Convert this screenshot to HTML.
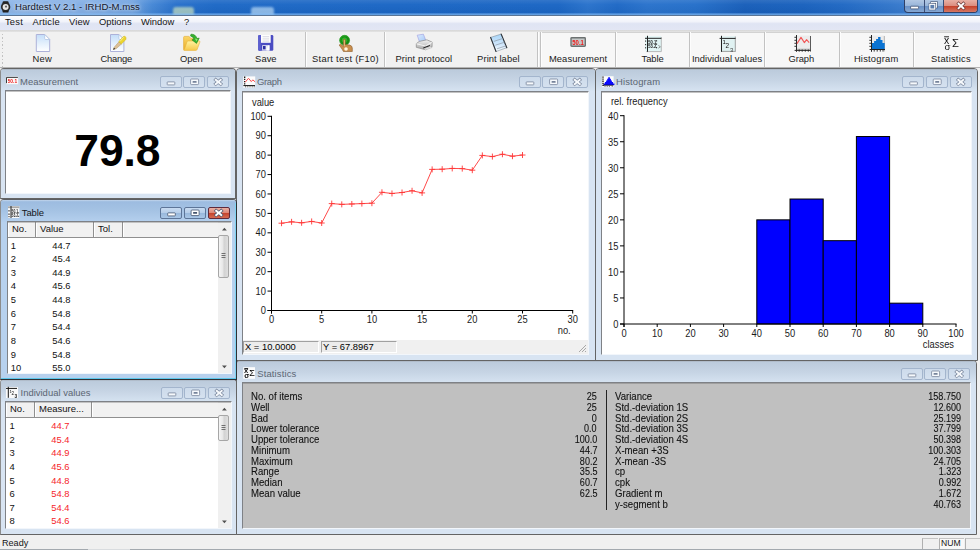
<!DOCTYPE html>
<html lang="en"><head><meta charset="utf-8"><title>Hardtest V 2.1 - IRHD-M.mss</title>
<style>
*{box-sizing:border-box;margin:0;padding:0}
html,body{width:980px;height:550px;overflow:hidden;background:#f0f0f0}
body{font-family:"Liberation Sans",sans-serif;font-size:9.4px;color:#000;position:relative;line-height:1}
.a{position:absolute}
.t{position:absolute;white-space:pre;line-height:12px;height:12px}
#title{left:0;top:0;width:980px;height:15px;background:linear-gradient(90deg,#8fb7e8 0,#84afe5 8%,#6fa2e0 13.5%,#4688d6 15.5%,#2870cb 18%,#1e69c6 22%,#1c67c5 40%,#1b66c4 57%,#2a73cc 60%,#1f69c6 63%,#2a73cc 66%,#2670ca 71%,#195fba 76%,#1a62be 82%,#2169c4 86%,#3377cb 91%,#4a88d4 96%,#5a94da 100%)}
#title .sh{left:0;top:0;width:980px;height:15px;background:linear-gradient(180deg,rgba(255,255,255,.10) 0,rgba(255,255,255,.02) 30%,rgba(0,0,0,.03) 80%,rgba(0,0,0,0) 100%)}
.blob{position:absolute;top:7px;height:9px;border-radius:3px 3px 0 0;filter:blur(1.2px)}
#tline{left:0;top:15px;width:980px;height:1px;background:#5a7596}
#menu{left:0;top:16px;width:980px;height:14px;background:linear-gradient(180deg,#fcfdff 0,#f1f3fa 40%,#dfe4f3 55%,#e2e6f4 100%)}
#mline{left:0;top:30px;width:980px;height:2px;background:linear-gradient(180deg,#d6d6d6,#e4e4e4)}
#tb{left:0;top:32px;width:980px;height:35px;background:#f1f1f1}
#tbline{left:0;top:67px;width:980px;height:1px;background:#b4b4b4}
.tl{position:absolute;top:52.5px;height:12px;line-height:12px;white-space:pre;font-size:9.4px;color:#1a1a1a}
.sep{position:absolute;top:32px;width:1px;height:35px;background:#c2c2c2;box-shadow:1px 0 0 #fdfdfd}
.w{position:absolute;background:#d8e4f2;border:1px solid #646464;border-radius:4px 4px 0 0}
.w .tbar{position:absolute;left:0;top:0;right:0;height:22px;border-radius:3px 3px 0 0;background:linear-gradient(180deg,#a9b3bf 0,#bccbdc 6%,#c6d4e4 50%,#d6e3f1 100%)}
.w.act{background:#b7d1ee;border-color:#2e3034;border-top-color:#5c5e62;border-left-color:#8c8c8c;z-index:2}
.w.act .tbar{background:linear-gradient(180deg,#c3d6ec 0,#9dbce0 8%,#a5c3e4 50%,#b5d0ee 100%)}
.w.act .cy{position:absolute;right:0;top:3px;bottom:0;width:1px;background:#7fd4f2}
.w.act .cyb{position:absolute;left:0;right:0;bottom:0;height:1px;background:#5cc6ea}
.w .cap{position:absolute;height:12px;line-height:12px;font-size:9.45px;color:#5b6673;white-space:pre}
.w.act .cap{color:#15161a}
.cl{position:absolute;background:#fff;border:1px solid #7e8186;border-right-color:#f2f6fb;border-bottom-color:#f2f6fb}
.cl:after{content:'';position:absolute;left:0;top:0;right:0;height:1px;background:rgba(120,120,120,.45);pointer-events:none}
.cb{position:absolute;height:12px;width:22px;border:1px solid #a3b5cd;border-radius:2px;background:linear-gradient(180deg,#cddbeb 0,#d5e1ef 100%)}
.w.act .cb{border-color:#5d7598;background:linear-gradient(180deg,#c8dbf1 0,#b5cde9 48%,#98b8dc 52%,#a9c6e6 100%)}
.w.act .cb.x{border-color:#5f2a3c;background:linear-gradient(180deg,#e9b0a4 0,#dc8676 48%,#c5432c 52%,#d46a52 100%)}
.hd{position:absolute;top:0;height:16px;background:#f1f1f1;border-right:1px solid #8f8f8f;border-bottom:1px solid #8f8f8f;box-shadow:inset 1px 1px 0 #fff;font-size:9.5px;line-height:14px;padding:0 0 0 4px;white-space:pre;color:#111}
.row{position:absolute;height:12px;line-height:12px;font-size:9.4px;white-space:pre;color:#111}
.sb{position:absolute;right:0;top:0;bottom:0;width:13px;background:#f0f0f0}
.th{position:absolute;left:0;width:11px;border:1px solid #a6a6a6;border-radius:2px;background:linear-gradient(90deg,#f5f5f5 0,#e6e6e6 45%,#d2d2d2 55%,#dedede 100%)}
svg{position:absolute;left:0;top:0;overflow:visible}
svg text{font-family:"Liberation Sans",sans-serif}
.st{position:absolute;font-size:10.5px;line-height:11px;height:11px;white-space:pre;color:#111;-webkit-text-stroke:.1px #111;transform:scaleX(.915);transform-origin:0 50%}
.sv{position:absolute;font-size:10.5px;line-height:11px;height:11px;white-space:pre;color:#111;-webkit-text-stroke:.1px #111;transform:scaleX(.86);transform-origin:100% 50%}
</style></head>
<body>
<div id="title" class="a"><div class="blob" style="left:173px;width:21px;background:rgba(205,230,195,.7)"></div><div class="blob" style="left:251px;width:23px;background:rgba(190,222,250,.7)"></div><div class="sh a"></div><div class="a" style="left:0;top:13px;width:980px;height:2px;background:linear-gradient(180deg,rgba(130,185,240,.25),rgba(130,185,240,.8))"></div></div>
<div id="tline" class="a"></div>
<div class="t" style="left:15.1px;top:1px;font-size:9.6px;color:#14182a;text-shadow:0 0 3px rgba(255,255,255,.8),0 0 6px rgba(255,255,255,.55);">Hardtest V 2.1 - IRHD-M.mss</div>
<div class="a" style="left:904px;top:0;width:74px;height:13px;border:1px solid #2f4066;border-top:0;border-radius:0 0 4px 4px;overflow:hidden;background:linear-gradient(180deg,#b3c8e3 0,#98b5da 48%,#6a91c6 52%,#86a8d3 100%)"><div class="a" style="left:19px;top:0;width:1px;height:13px;background:#3a4d76"></div><div class="a" style="left:38px;top:0;width:1px;height:13px;background:#3a4d76"></div><div class="a" style="left:39px;top:0;width:34px;height:12px;background:linear-gradient(180deg,#e8b0a5 0,#dc8d7f 48%,#c5412a 52%,#d67864 100%)"></div></div>
<div id="menu" class="a"></div><div id="mline" class="a"></div>
<div class="t" style="left:4.9px;top:16px;font-size:9.4px;color:#151515;letter-spacing:0.232px;">Test</div>
<div class="t" style="left:32.5px;top:16px;font-size:9.4px;color:#151515;letter-spacing:0.176px;">Article</div>
<div class="t" style="left:68.9px;top:16px;font-size:9.4px;color:#151515;letter-spacing:0.181px;">View</div>
<div class="t" style="left:98.9px;top:16px;font-size:9.4px;color:#151515;letter-spacing:0.065px;">Options</div>
<div class="t" style="left:140.9px;top:16px;font-size:9.4px;color:#151515;letter-spacing:-0.009px;">Window</div>
<div class="t" style="left:183.9px;top:16px;font-size:9.4px;color:#151515;letter-spacing:0.481px;">?</div>
<div id="tb" class="a"></div><div id="tbline" class="a"></div>
<div class="a" style="left:541px;top:33px;width:439px;height:34px;background:#f7f7f7"></div>
<div class="a" style="left:541px;top:32px;width:439px;height:1px;background:#d2d2d2"></div>
<div class="a" style="left:2px;top:33.6px;width:1px;height:1.4px;background:#c2c2c2"></div>
<div class="a" style="left:2px;top:37.2px;width:1px;height:1.4px;background:#c2c2c2"></div>
<div class="a" style="left:2px;top:40.8px;width:1px;height:1.4px;background:#c2c2c2"></div>
<div class="a" style="left:2px;top:44.4px;width:1px;height:1.4px;background:#c2c2c2"></div>
<div class="a" style="left:2px;top:48.0px;width:1px;height:1.4px;background:#c2c2c2"></div>
<div class="a" style="left:2px;top:51.6px;width:1px;height:1.4px;background:#c2c2c2"></div>
<div class="a" style="left:2px;top:55.2px;width:1px;height:1.4px;background:#c2c2c2"></div>
<div class="a" style="left:2px;top:58.8px;width:1px;height:1.4px;background:#c2c2c2"></div>
<div class="a" style="left:2px;top:62.4px;width:1px;height:1.4px;background:#c2c2c2"></div>
<div class="a" style="left:2px;top:66.0px;width:1px;height:1.4px;background:#c2c2c2"></div>
<div class="tl" style="left:32.5px;letter-spacing:0.267px">New</div>
<div class="tl" style="left:100.5px;letter-spacing:-0.229px">Change</div>
<div class="tl" style="left:180.1px;letter-spacing:-0.146px">Open</div>
<div class="tl" style="left:255.1px;letter-spacing:0.042px">Save</div>
<div class="tl" style="left:312.0px;letter-spacing:0.278px">Start test (F10)</div>
<div class="tl" style="left:395.5px;letter-spacing:0.113px">Print protocol</div>
<div class="tl" style="left:477.1px;letter-spacing:0.08px">Print label</div>
<div class="tl" style="left:548.9px;letter-spacing:0.097px">Measurement</div>
<div class="tl" style="left:641.5px;letter-spacing:-0.03px">Table</div>
<div class="tl" style="left:691.9px;letter-spacing:0.061px">Individual values</div>
<div class="tl" style="left:788.5px;letter-spacing:-0.091px">Graph</div>
<div class="tl" style="left:853.9px;letter-spacing:0.198px">Histogram</div>
<div class="tl" style="left:931.1px;letter-spacing:0.22px">Statistics</div>
<div class="sep" style="left:305px"></div>
<div class="sep" style="left:384px"></div>
<div class="sep" style="left:537px"></div>
<div class="sep" style="left:540px"></div>
<div class="sep" style="left:615px"></div>
<div class="sep" style="left:689px"></div>
<div class="sep" style="left:764px"></div>
<div class="sep" style="left:839px"></div>
<div class="sep" style="left:913px"></div>
<div class="w" style="left:0px;top:68px;width:236px;height:131px;border-left-color:#8c8c8c"><div class="tbar"></div><div class="cap" style="left:19.1px;top:6.799999999999997px;letter-spacing:0.04px">Measurement</div><div class="cb x" style="left:206px;top:7.299999999999997px"></div><div class="cb" style="left:182.2px;top:7.299999999999997px"></div><div class="cb" style="left:158.8px;top:7.299999999999997px"></div><svg width="236" height="22" viewBox="0 0 236 22"><rect x="166.20000000000002" y="12.899999999999997" width="7.6" height="3" rx=".5" fill="#f6f9fc" stroke="#76839a" stroke-width=".8"/><rect x="189.6" y="9.999999999999996" width="8" height="5.6" rx=".9" fill="#f6f9fc" stroke="#76839a" stroke-width=".8"/><rect x="191.6" y="11.899999999999997" width="4" height="1.9" rx=".4" fill="#76839a"/><path d="M214.7 10.799999999999997l5 4.2M219.7 10.799999999999997l-5 4.2" stroke="#76839a" stroke-width="3.3" stroke-linecap="square"/><path d="M214.7 10.799999999999997l5 4.2M219.7 10.799999999999997l-5 4.2" stroke="#f6f9fc" stroke-width="2" stroke-linecap="square"/></svg><div class="cl" style="left:4px;top:21px;width:226px;height:104px"><div class="a" style="left:0;top:0;right:0;bottom:0;overflow:hidden"><div class="a" style="left:0;top:0;right:0;bottom:0;text-align:center;font-weight:bold;font-size:44.4px;line-height:44px;padding-top:38.4px;letter-spacing:-.1px;padding-right:1.4px">79.8</div></div></div></div>
<div class="w act" style="left:0px;top:199px;width:237px;height:181px;border-left-color:#8c8c8c"><div class="tbar"></div><div class="cy"></div><div class="cyb"></div><div class="cap" style="left:20.8px;top:6.800000000000011px;letter-spacing:-0.116px">Table</div><div class="cb x" style="left:206.5px;top:7.300000000000011px"></div><div class="cb" style="left:182.7px;top:7.300000000000011px"></div><div class="cb" style="left:159.3px;top:7.300000000000011px"></div><svg width="237" height="22" viewBox="0 0 237 22"><rect x="166.70000000000002" y="12.900000000000011" width="7.6" height="3" rx=".5" fill="#fff" stroke="#44546e" stroke-width=".8"/><rect x="190.1" y="10.00000000000001" width="8" height="5.6" rx=".9" fill="#fff" stroke="#44546e" stroke-width=".8"/><rect x="192.1" y="11.900000000000011" width="4" height="1.9" rx=".4" fill="#44546e"/><path d="M215.2 10.800000000000011l5 4.2M220.2 10.800000000000011l-5 4.2" stroke="#44546e" stroke-width="3.3" stroke-linecap="square"/><path d="M215.2 10.800000000000011l5 4.2M220.2 10.800000000000011l-5 4.2" stroke="#fff" stroke-width="2" stroke-linecap="square"/></svg><div class="cl" style="left:6px;top:21px;width:225px;height:153px"><div class="a" style="left:0;top:0;right:0;bottom:0;overflow:hidden"><div class="hd" style="left:0px;width:28px;height:16px">No.</div><div class="hd" style="left:28px;width:58px;height:16px">Value</div><div class="hd" style="left:86px;width:29px;height:16px">Tol.</div><div class="hd" style="left:115px;right:13px;border-right:0;height:16px"></div><div class="sb"><svg width="13" height="14" viewBox="0 0 13 14"><path d="M4 8.6l2.4-2.8 2.4 2.8z" fill="#505050"/></svg><div class="th" style="top:13px;height:43px"></div><svg width="13" height="80" viewBox="0 0 13 80"><path d="M3.5 31.5h4M3.5 33.5h4M3.5 35.5h4" stroke="#6f6f6f" stroke-width="1"/></svg><svg width="13" height="10" style="top:auto;bottom:1px" viewBox="0 0 13 10"><path d="M4 3.4l2.4 2.8 2.4-2.8z" fill="#505050"/></svg></div><div class="row" style="left:2.8px;top:17.50px">1</div><div class="row" style="left:44.3px;top:17.50px;color:#111">44.7</div><div class="row" style="left:2.8px;top:31.13px">2</div><div class="row" style="left:44.3px;top:31.13px;color:#111">45.4</div><div class="row" style="left:2.8px;top:44.76px">3</div><div class="row" style="left:44.3px;top:44.76px;color:#111">44.9</div><div class="row" style="left:2.8px;top:58.39px">4</div><div class="row" style="left:44.3px;top:58.39px;color:#111">45.6</div><div class="row" style="left:2.8px;top:72.02px">5</div><div class="row" style="left:44.3px;top:72.02px;color:#111">44.8</div><div class="row" style="left:2.8px;top:85.65px">6</div><div class="row" style="left:44.3px;top:85.65px;color:#111">54.8</div><div class="row" style="left:2.8px;top:99.28px">7</div><div class="row" style="left:44.3px;top:99.28px;color:#111">54.4</div><div class="row" style="left:2.8px;top:112.91px">8</div><div class="row" style="left:44.3px;top:112.91px;color:#111">54.6</div><div class="row" style="left:2.8px;top:126.54px">9</div><div class="row" style="left:44.3px;top:126.54px;color:#111">54.8</div><div class="row" style="left:2.8px;top:140.17px">10</div><div class="row" style="left:44.3px;top:140.17px;color:#111">55.0</div></div></div></div>
<div class="w" style="left:0px;top:379px;width:237px;height:156px;border-left-color:#8c8c8c"><div class="tbar"></div><div class="cap" style="left:19.5px;top:6.800000000000011px;letter-spacing:0.014px">Individual values</div><div class="cb x" style="left:207px;top:7.300000000000011px"></div><div class="cb" style="left:183.2px;top:7.300000000000011px"></div><div class="cb" style="left:159.8px;top:7.300000000000011px"></div><svg width="237" height="22" viewBox="0 0 237 22"><rect x="167.20000000000002" y="12.900000000000011" width="7.6" height="3" rx=".5" fill="#f6f9fc" stroke="#76839a" stroke-width=".8"/><rect x="190.6" y="10.00000000000001" width="8" height="5.6" rx=".9" fill="#f6f9fc" stroke="#76839a" stroke-width=".8"/><rect x="192.6" y="11.900000000000011" width="4" height="1.9" rx=".4" fill="#76839a"/><path d="M215.7 10.800000000000011l5 4.2M220.7 10.800000000000011l-5 4.2" stroke="#76839a" stroke-width="3.3" stroke-linecap="square"/><path d="M215.7 10.800000000000011l5 4.2M220.7 10.800000000000011l-5 4.2" stroke="#f6f9fc" stroke-width="2" stroke-linecap="square"/></svg><div class="cl" style="left:4px;top:21px;width:227px;height:128px"><div class="a" style="left:0;top:0;right:0;bottom:0;overflow:hidden"><div class="hd" style="left:0px;width:29px;height:16px">No.</div><div class="hd" style="left:29px;width:57px;height:16px">Measure...</div><div class="hd" style="left:86px;right:13px;border-right:0;height:16px"></div><div class="sb"><svg width="13" height="14" viewBox="0 0 13 14"><path d="M4 8.6l2.4-2.8 2.4 2.8z" fill="#505050"/></svg><div class="th" style="top:13px;height:26px"></div><svg width="13" height="80" viewBox="0 0 13 80"><path d="M3.5 23.5h4M3.5 25.5h4M3.5 27.5h4" stroke="#6f6f6f" stroke-width="1"/></svg><svg width="13" height="10" style="top:auto;bottom:1px" viewBox="0 0 13 10"><path d="M4 3.4l2.4 2.8 2.4-2.8z" fill="#505050"/></svg></div><div class="row" style="left:3.5px;top:18.00px">1</div><div class="row" style="left:45.3px;top:18.00px;color:#f5252b">44.7</div><div class="row" style="left:3.5px;top:31.63px">2</div><div class="row" style="left:45.3px;top:31.63px;color:#f5252b">45.4</div><div class="row" style="left:3.5px;top:45.26px">3</div><div class="row" style="left:45.3px;top:45.26px;color:#f5252b">44.9</div><div class="row" style="left:3.5px;top:58.89px">4</div><div class="row" style="left:45.3px;top:58.89px;color:#f5252b">45.6</div><div class="row" style="left:3.5px;top:72.52px">5</div><div class="row" style="left:45.3px;top:72.52px;color:#f5252b">44.8</div><div class="row" style="left:3.5px;top:86.15px">6</div><div class="row" style="left:45.3px;top:86.15px;color:#f5252b">54.8</div><div class="row" style="left:3.5px;top:99.78px">7</div><div class="row" style="left:45.3px;top:99.78px;color:#f5252b">54.4</div><div class="row" style="left:3.5px;top:113.41px">8</div><div class="row" style="left:45.3px;top:113.41px;color:#f5252b">54.6</div></div></div></div>
<div class="w" style="left:236px;top:68px;width:360px;height:293px"><div class="tbar"></div><div class="cap" style="left:19.899999999999977px;top:6.799999999999997px;letter-spacing:-0.284px">Graph</div><div class="cb x" style="left:329px;top:7.299999999999997px"></div><div class="cb" style="left:305.2px;top:7.299999999999997px"></div><div class="cb" style="left:281.8px;top:7.299999999999997px"></div><svg width="360" height="22" viewBox="0 0 360 22"><rect x="289.2" y="12.899999999999997" width="7.6" height="3" rx=".5" fill="#f6f9fc" stroke="#76839a" stroke-width=".8"/><rect x="312.59999999999997" y="9.999999999999996" width="8" height="5.6" rx=".9" fill="#f6f9fc" stroke="#76839a" stroke-width=".8"/><rect x="314.59999999999997" y="11.899999999999997" width="4" height="1.9" rx=".4" fill="#76839a"/><path d="M337.7 10.799999999999997l5 4.2M342.7 10.799999999999997l-5 4.2" stroke="#76839a" stroke-width="3.3" stroke-linecap="square"/><path d="M337.7 10.799999999999997l5 4.2M342.7 10.799999999999997l-5 4.2" stroke="#f6f9fc" stroke-width="2" stroke-linecap="square"/></svg><div class="cl" style="left:5px;top:22px;width:347px;height:264px"><div class="a" style="left:0;top:0;right:0;bottom:0;overflow:hidden"><svg width="346" height="262" viewBox="0 0 346 262"><path d="M28.5 23.80000000000001V221.5M24.5 218.5H330.20000000000005" fill="none" stroke="#000" stroke-width="1"/><path d="M24.5 218.50H28.5M24.5 199.08H28.5M24.5 179.66H28.5M24.5 160.24H28.5M24.5 140.82H28.5M24.5 121.40H28.5M24.5 101.98H28.5M24.5 82.56H28.5M24.5 63.14H28.5M24.5 43.72H28.5M24.5 24.30H28.5M28.50 218.5V221.5M78.70 218.5V221.5M128.90 218.5V221.5M179.10 218.5V221.5M229.30 218.5V221.5M279.50 218.5V221.5M329.70 218.5V221.5" stroke="#000" stroke-width="1" fill="none"/><text transform="translate(23.00 222.10) scale(0.925 1)" font-size="10.1" text-anchor="end" fill="#1c1c1c">0</text><text transform="translate(23.00 202.68) scale(0.925 1)" font-size="10.1" text-anchor="end" fill="#1c1c1c">10</text><text transform="translate(23.00 183.26) scale(0.925 1)" font-size="10.1" text-anchor="end" fill="#1c1c1c">20</text><text transform="translate(23.00 163.84) scale(0.925 1)" font-size="10.1" text-anchor="end" fill="#1c1c1c">30</text><text transform="translate(23.00 144.42) scale(0.925 1)" font-size="10.1" text-anchor="end" fill="#1c1c1c">40</text><text transform="translate(23.00 125.00) scale(0.925 1)" font-size="10.1" text-anchor="end" fill="#1c1c1c">50</text><text transform="translate(23.00 105.58) scale(0.925 1)" font-size="10.1" text-anchor="end" fill="#1c1c1c">60</text><text transform="translate(23.00 86.16) scale(0.925 1)" font-size="10.1" text-anchor="end" fill="#1c1c1c">70</text><text transform="translate(23.00 66.74) scale(0.925 1)" font-size="10.1" text-anchor="end" fill="#1c1c1c">80</text><text transform="translate(23.00 47.32) scale(0.925 1)" font-size="10.1" text-anchor="end" fill="#1c1c1c">90</text><text transform="translate(23.00 27.90) scale(0.925 1)" font-size="10.1" text-anchor="end" fill="#1c1c1c">100</text><text transform="translate(28.50 231.30) scale(0.925 1)" font-size="10.1" text-anchor="middle" fill="#1c1c1c">0</text><text transform="translate(78.70 231.30) scale(0.925 1)" font-size="10.1" text-anchor="middle" fill="#1c1c1c">5</text><text transform="translate(128.90 231.30) scale(0.925 1)" font-size="10.1" text-anchor="middle" fill="#1c1c1c">10</text><text transform="translate(179.10 231.30) scale(0.925 1)" font-size="10.1" text-anchor="middle" fill="#1c1c1c">15</text><text transform="translate(229.30 231.30) scale(0.925 1)" font-size="10.1" text-anchor="middle" fill="#1c1c1c">20</text><text transform="translate(279.50 231.30) scale(0.925 1)" font-size="10.1" text-anchor="middle" fill="#1c1c1c">25</text><text transform="translate(329.70 231.30) scale(0.925 1)" font-size="10.1" text-anchor="middle" fill="#1c1c1c">30</text><text transform="translate(9.00 13.80) scale(0.925 1)" font-size="10.1" text-anchor="start" fill="#1c1c1c">value</text><text transform="translate(327.70 241.90) scale(0.925 1)" font-size="10.1" text-anchor="end" fill="#1c1c1c">no.</text><polyline points="38.54,131.19 48.58,129.83 58.62,130.80 68.66,129.44 78.70,131.00 88.74,111.58 98.78,112.36 108.82,111.97 118.86,111.58 128.90,111.19 138.94,100.31 148.98,101.48 159.02,100.51 169.06,98.76 179.10,100.90 189.14,77.40 199.18,77.21 209.22,76.43 219.26,76.62 229.30,78.18 239.34,63.42 249.38,64.58 259.42,62.25 269.46,64.19 279.50,63.03" fill="none" stroke="#ff3535" stroke-width=".9"/><path d="M35.54 131.19h6M38.54 128.19v6M45.58 129.83h6M48.58 126.83v6M55.62 130.80h6M58.62 127.80v6M65.66 129.44h6M68.66 126.44v6M75.70 131.00h6M78.70 128.00v6M85.74 111.58h6M88.74 108.58v6M95.78 112.36h6M98.78 109.36v6M105.82 111.97h6M108.82 108.97v6M115.86 111.58h6M118.86 108.58v6M125.90 111.19h6M128.90 108.19v6M135.94 100.31h6M138.94 97.31v6M145.98 101.48h6M148.98 98.48v6M156.02 100.51h6M159.02 97.51v6M166.06 98.76h6M169.06 95.76v6M176.10 100.90h6M179.10 97.90v6M186.14 77.40h6M189.14 74.40v6M196.18 77.21h6M199.18 74.21v6M206.22 76.43h6M209.22 73.43v6M216.26 76.62h6M219.26 73.62v6M226.30 78.18h6M229.30 75.18v6M236.34 63.42h6M239.34 60.42v6M246.38 64.58h6M249.38 61.58v6M256.42 62.25h6M259.42 59.25v6M266.46 64.19h6M269.46 61.19v6M276.50 63.03h6M279.50 60.03v6" stroke="#ff3535" stroke-width=".9" fill="none"/></svg><div class="a" style="left:0;right:0;bottom:0;height:14px;background:#f0f0f0"></div><div class="a" style="left:0;bottom:1px;width:76px;height:12px;background:#ececec;border:1px solid #a0a0a0;border-right-color:#fff;border-bottom-color:#fff"></div><div class="a" style="left:78px;bottom:1px;width:76px;height:12px;background:#ececec;border:1px solid #a0a0a0;border-right-color:#fff;border-bottom-color:#fff"></div><div class="t" style="left:2px;bottom:1px;font-size:9.4px">X = 10.0000</div><div class="t" style="left:80px;bottom:1px;font-size:9.4px">Y = 67.8967</div><svg width="10" height="10" style="left:auto;top:auto;right:1px;bottom:1px" viewBox="0 0 10 10"><path d="M9 2L2 9M9 5L5 9M9 8L8 9" stroke="#a8a8a8" stroke-width="1"/></svg></div></div></div>
<div class="w" style="left:595px;top:68px;width:383px;height:293px"><div class="tbar"></div><div class="cap" style="left:20.0px;top:6.799999999999997px;letter-spacing:0.136px">Histogram</div><div class="cb x" style="left:353.6px;top:7.299999999999997px"></div><div class="cb" style="left:329.8px;top:7.299999999999997px"></div><div class="cb" style="left:306.40000000000003px;top:7.299999999999997px"></div><svg width="383" height="22" viewBox="0 0 383 22"><rect x="313.8" y="12.899999999999997" width="7.6" height="3" rx=".5" fill="#f6f9fc" stroke="#76839a" stroke-width=".8"/><rect x="337.2" y="9.999999999999996" width="8" height="5.6" rx=".9" fill="#f6f9fc" stroke="#76839a" stroke-width=".8"/><rect x="339.2" y="11.899999999999997" width="4" height="1.9" rx=".4" fill="#76839a"/><path d="M362.3 10.799999999999997l5 4.2M367.3 10.799999999999997l-5 4.2" stroke="#76839a" stroke-width="3.3" stroke-linecap="square"/><path d="M362.3 10.799999999999997l5 4.2M367.3 10.799999999999997l-5 4.2" stroke="#f6f9fc" stroke-width="2" stroke-linecap="square"/></svg><div class="cl" style="left:5px;top:22px;width:371px;height:264px"><div class="a" style="left:0;top:0;right:0;bottom:0;overflow:hidden"><svg width="370" height="262" viewBox="0 0 370 262"><rect x="154.80" y="127.85" width="33.20" height="104.15" fill="#0000ff" stroke="#000" stroke-width="1"/><rect x="188.00" y="107.02" width="33.20" height="124.98" fill="#0000ff" stroke="#000" stroke-width="1"/><rect x="221.20" y="148.68" width="33.20" height="83.32" fill="#0000ff" stroke="#000" stroke-width="1"/><rect x="254.40" y="44.53" width="33.20" height="187.47" fill="#0000ff" stroke="#000" stroke-width="1"/><rect x="287.60" y="211.17" width="33.20" height="20.83" fill="#0000ff" stroke="#000" stroke-width="1"/><path d="M22 23.19999999999999V235M18 232H354.5" fill="none" stroke="#000" stroke-width="1"/><path d="M18 232.00H22M18 205.96H22M18 179.93H22M18 153.89H22M18 127.85H22M18 101.81H22M18 75.77H22M18 49.74H22M18 23.70H22M22.00 232V235M55.20 232V235M88.40 232V235M121.60 232V235M154.80 232V235M188.00 232V235M221.20 232V235M254.40 232V235M287.60 232V235M320.80 232V235M354.00 232V235" stroke="#000" stroke-width="1" fill="none"/><text transform="translate(16.50 236.00) scale(0.925 1)" font-size="10.1" text-anchor="end" fill="#1c1c1c">0</text><text transform="translate(16.50 209.96) scale(0.925 1)" font-size="10.1" text-anchor="end" fill="#1c1c1c">5</text><text transform="translate(16.50 183.93) scale(0.925 1)" font-size="10.1" text-anchor="end" fill="#1c1c1c">10</text><text transform="translate(16.50 157.89) scale(0.925 1)" font-size="10.1" text-anchor="end" fill="#1c1c1c">15</text><text transform="translate(16.50 131.85) scale(0.925 1)" font-size="10.1" text-anchor="end" fill="#1c1c1c">20</text><text transform="translate(16.50 105.81) scale(0.925 1)" font-size="10.1" text-anchor="end" fill="#1c1c1c">25</text><text transform="translate(16.50 79.77) scale(0.925 1)" font-size="10.1" text-anchor="end" fill="#1c1c1c">30</text><text transform="translate(16.50 53.74) scale(0.925 1)" font-size="10.1" text-anchor="end" fill="#1c1c1c">35</text><text transform="translate(16.50 27.70) scale(0.925 1)" font-size="10.1" text-anchor="end" fill="#1c1c1c">40</text><text transform="translate(22.00 245.20) scale(0.925 1)" font-size="10.1" text-anchor="middle" fill="#1c1c1c">0</text><text transform="translate(55.20 245.20) scale(0.925 1)" font-size="10.1" text-anchor="middle" fill="#1c1c1c">10</text><text transform="translate(88.40 245.20) scale(0.925 1)" font-size="10.1" text-anchor="middle" fill="#1c1c1c">20</text><text transform="translate(121.60 245.20) scale(0.925 1)" font-size="10.1" text-anchor="middle" fill="#1c1c1c">30</text><text transform="translate(154.80 245.20) scale(0.925 1)" font-size="10.1" text-anchor="middle" fill="#1c1c1c">40</text><text transform="translate(188.00 245.20) scale(0.925 1)" font-size="10.1" text-anchor="middle" fill="#1c1c1c">50</text><text transform="translate(221.20 245.20) scale(0.925 1)" font-size="10.1" text-anchor="middle" fill="#1c1c1c">60</text><text transform="translate(254.40 245.20) scale(0.925 1)" font-size="10.1" text-anchor="middle" fill="#1c1c1c">70</text><text transform="translate(287.60 245.20) scale(0.925 1)" font-size="10.1" text-anchor="middle" fill="#1c1c1c">80</text><text transform="translate(320.80 245.20) scale(0.925 1)" font-size="10.1" text-anchor="middle" fill="#1c1c1c">90</text><text transform="translate(354.00 245.20) scale(0.925 1)" font-size="10.1" text-anchor="middle" fill="#1c1c1c">100</text><text transform="translate(9.00 13.00) scale(0.925 1)" font-size="10.1" text-anchor="start" fill="#1c1c1c">rel. frequency</text><text transform="translate(352.00 255.70) scale(0.925 1)" font-size="10.1" text-anchor="end" fill="#1c1c1c">classes</text></svg></div></div></div>
<div class="w" style="left:236px;top:360px;width:741px;height:175px"><div class="tbar"></div><div class="cap" style="left:20.30000000000001px;top:6.800000000000011px;letter-spacing:0.126px">Statistics</div><div class="cb x" style="left:711px;top:7.300000000000011px"></div><div class="cb" style="left:687.2px;top:7.300000000000011px"></div><div class="cb" style="left:663.8px;top:7.300000000000011px"></div><svg width="741" height="22" viewBox="0 0 741 22"><rect x="671.1999999999999" y="12.900000000000011" width="7.6" height="3" rx=".5" fill="#f6f9fc" stroke="#76839a" stroke-width=".8"/><rect x="694.6" y="10.00000000000001" width="8" height="5.6" rx=".9" fill="#f6f9fc" stroke="#76839a" stroke-width=".8"/><rect x="696.6" y="11.900000000000011" width="4" height="1.9" rx=".4" fill="#76839a"/><path d="M719.7 10.800000000000011l5 4.2M724.7 10.800000000000011l-5 4.2" stroke="#76839a" stroke-width="3.3" stroke-linecap="square"/><path d="M719.7 10.800000000000011l5 4.2M724.7 10.800000000000011l-5 4.2" stroke="#f6f9fc" stroke-width="2" stroke-linecap="square"/></svg><div class="cl" style="left:5px;top:21px;width:729px;height:147px"><div class="a" style="left:0;top:0;right:0;bottom:0;overflow:hidden"><div class="a" style="left:0;top:0;right:0;bottom:0;background:#c0c0c0"></div><div class="st" style="left:8.400000000000006px;top:8.00px">No. of items</div><div class="sv" style="right:373px;top:8.00px">25</div><div class="st" style="left:8.400000000000006px;top:18.50px">Well</div><div class="sv" style="right:373px;top:18.50px">25</div><div class="st" style="left:8.400000000000006px;top:29.50px">Bad</div><div class="sv" style="right:373px;top:29.50px">0</div><div class="st" style="left:8.400000000000006px;top:40.00px">Lower tolerance</div><div class="sv" style="right:373px;top:40.00px">0.0</div><div class="st" style="left:8.400000000000006px;top:50.50px">Upper tolerance</div><div class="sv" style="right:373px;top:50.50px">100.0</div><div class="st" style="left:8.400000000000006px;top:61.50px">Minimum</div><div class="sv" style="right:373px;top:61.50px">44.7</div><div class="st" style="left:8.400000000000006px;top:72.50px">Maximum</div><div class="sv" style="right:373px;top:72.50px">80.2</div><div class="st" style="left:8.400000000000006px;top:83.00px">Range</div><div class="sv" style="right:373px;top:83.00px">35.5</div><div class="st" style="left:8.400000000000006px;top:93.50px">Median</div><div class="sv" style="right:373px;top:93.50px">60.7</div><div class="st" style="left:8.400000000000006px;top:104.50px">Mean value</div><div class="sv" style="right:373px;top:104.50px">62.5</div><div class="st" style="left:371.5px;top:8.00px">Variance</div><div class="sv" style="right:9px;top:8.00px">158.750</div><div class="st" style="left:371.5px;top:18.50px">Std.-deviation 1S</div><div class="sv" style="right:9px;top:18.50px">12.600</div><div class="st" style="left:371.5px;top:29.50px">Std.-deviation 2S</div><div class="sv" style="right:9px;top:29.50px">25.199</div><div class="st" style="left:371.5px;top:40.00px">Std.-deviation 3S</div><div class="sv" style="right:9px;top:40.00px">37.799</div><div class="st" style="left:371.5px;top:50.50px">Std.-deviation 4S</div><div class="sv" style="right:9px;top:50.50px">50.398</div><div class="st" style="left:371.5px;top:61.50px">X-mean +3S</div><div class="sv" style="right:9px;top:61.50px">100.303</div><div class="st" style="left:371.5px;top:72.50px">X-mean -3S</div><div class="sv" style="right:9px;top:72.50px">24.705</div><div class="st" style="left:371.5px;top:83.00px">cp</div><div class="sv" style="right:9px;top:83.00px">1.323</div><div class="st" style="left:371.5px;top:93.50px">cpk</div><div class="sv" style="right:9px;top:93.50px">0.992</div><div class="st" style="left:371.5px;top:104.50px">Gradient m</div><div class="sv" style="right:9px;top:104.50px">1.672</div><div class="st" style="left:371.5px;top:116.00px">y-segment b</div><div class="sv" style="right:9px;top:116.00px">40.763</div><div class="a" style="left:363px;top:7px;width:1px;height:120px;background:#222"></div></div></div></div>
<div class="a" style="left:0;top:535px;width:980px;height:14px;background:#f0f0f0"></div>
<div class="t" style="left:2px;top:537px;font-size:9.1px;color:#151515;">Ready</div>
<div class="a" style="left:922px;top:538px;width:16px;height:11px;border-left:1px solid #b0b0b0;border-top:1px solid #c4c4c4"></div>
<div class="a" style="left:939px;top:538px;width:25px;height:11px;border-left:1px solid #b0b0b0;border-top:1px solid #c4c4c4;background:#f8f8f8"></div>
<div class="a" style="left:965px;top:538px;width:15px;height:11px;border-left:1px solid #b0b0b0;border-top:1px solid #c4c4c4"></div>
<div class="t" style="left:941px;top:537.2px;font-size:8.6px;color:#151515;">NUM</div>
<div class="a" style="left:0;top:549px;width:980px;height:1px;background:#a3a9af"></div>
<div class="a" style="left:88px;top:549px;width:42px;height:1px;background:#d9dcdf"></div>
<svg width="980" height="550" viewBox="0 0 980 550" style="left:0;top:0;opacity:.999;z-index:5;pointer-events:none"><defs><linearGradient id="pg" x1="0" y1="0" x2="0" y2="1"><stop offset="0" stop-color="#c3ddf9"/><stop offset=".5" stop-color="#e2effc"/><stop offset="1" stop-color="#ffffff"/></linearGradient><linearGradient id="fo" x1="0" y1="0" x2="0" y2="1"><stop offset="0" stop-color="#fff2a0"/><stop offset="1" stop-color="#f7c84a"/></linearGradient><linearGradient id="fo2" x1="0" y1="0" x2="0" y2="1"><stop offset="0" stop-color="#fbd666"/><stop offset="1" stop-color="#e9ae2c"/></linearGradient><radialGradient id="gr" cx=".45" cy=".45" r=".6"><stop offset="0" stop-color="#3ed03a"/><stop offset=".6" stop-color="#1fa31c"/><stop offset="1" stop-color="#0d7a0c"/></radialGradient><linearGradient id="lb" x1="0" y1="0" x2="0" y2="1"><stop offset="0" stop-color="#a9d6f8"/><stop offset=".6" stop-color="#cfe6fb"/><stop offset="1" stop-color="#fafdff"/></linearGradient><linearGradient id="pr" x1="0" y1="0" x2="0" y2="1"><stop offset="0" stop-color="#f2f2f2"/><stop offset="1" stop-color="#a6a6a6"/></linearGradient><linearGradient id="pp" x1="0" y1="0" x2="1" y2="1"><stop offset="0" stop-color="#dcebfd"/><stop offset="1" stop-color="#9fc4f6"/></linearGradient></defs><path d="M36.3 34.5h8.4l5 5v12h-13.4z" fill="url(#pg)" stroke="#adb2d9" stroke-width="1" stroke-linejoin="round"/><path d="M44.699999999999996 34.5v4q0 1 1 1h4z" fill="#fff" stroke="#a9bfe0" stroke-width=".7" stroke-linejoin="round"/><path d="M110.5 34.5h8.4l5 5v12h-13.4z" fill="url(#pg)" stroke="#adb2d9" stroke-width="1" stroke-linejoin="round"/><path d="M118.9 34.5v4q0 1 1 1h4z" fill="#fff" stroke="#a9bfe0" stroke-width=".7" stroke-linejoin="round"/><path d="M113.3 49.5l.9-2.3 5-5.6 2.5 2.2-5.6 4.9z" fill="#dcc096" stroke="#b39466" stroke-width=".5"/><path d="M113 49.8l1-2 1.3 1.2z" fill="#2b2b2b"/><path d="M118.8 41.7l4.2-4.9q1.3-1 2.3-.2l.7 1.2q.3 1.3-.5 2.2l-4.2 4z" fill="#ecd52e" stroke="#cfb21a" stroke-width=".5"/><path d="M120 41.4l3.6-4" stroke="#f8ef9a" stroke-width=".9" fill="none"/><path d="M183.6 49.8v-12.4q0-1 1-1h4q.8 0 1.2.7l.8 1.3h6.2q1 0 1 1v3z" fill="url(#fo2)" stroke="#e0a72a" stroke-width=".6"/><path d="M184 50.4l3-8.6q.3-.8 1.2-.8h11q1 0 .7 1l-2.8 7.6q-.3.8-1.2.8z" fill="url(#fo)" stroke="#e6b23a" stroke-width=".6"/><path d="M191 34.2q4.6-.2 6 4.3l2.2-.4-2.7 5.3-4.6-3.6 2.2-.5q-.8-2.6-3.6-3.4z" fill="#37b02e" stroke="#1f8a1b" stroke-width=".6" stroke-linejoin="round"/><path d="M194.8 38.5l1.8 3 1-2.4z" fill="#8ce86f"/><path d="M258.2 36.3q0-1.2 1.2-1.2h12.6q1.3 0 1.3 1.2v13.3q0 1.2-1.3 1.2h-12.6q-1.2 0-1.2-1.2z" fill="#4a4cc2"/><path d="M258.2 36.3q0-1.2 1.2-1.2h1.4v15.7h-1.4q-1.2 0-1.2-1.2z" fill="#5d60cf"/><rect x="261" y="35" width="9.7" height="7.8" fill="#fdfdfd"/><path d="M262.6 36.7h6.5M262.6 38.9h6.5M262.6 41.1h6.5" stroke="#c9c9d6" stroke-width=".7"/><rect x="262.2" y="45.2" width="7.2" height="5.4" fill="#e9ebf6"/><rect x="263" y="46" width="2.6" height="3.4" fill="#2d2fa0"/><path d="M266.3 50.6l2.2-5.4h1v5.4z" fill="#fff"/><circle cx="344.6" cy="40.3" r="5" fill="url(#gr)" stroke="#1d9a1a" stroke-width=".6"/><circle cx="344.6" cy="40.3" r="3.4" fill="none" stroke="#0e6d0d" stroke-width=".9" opacity=".55"/><path d="M339.2 45l1.3-.9 2.9 2.3v-6.3q0-1 .95-1t.95 1v4.4l4.4.6q2.4.5 2.6 2.8v3.6h-8.9l-1.2-2.2z" fill="#c98f4e" stroke="#8a5a28" stroke-width=".6" stroke-linejoin="round"/><ellipse cx="346" cy="49" rx="1.8" ry="1.7" fill="#fff6e0"/><path d="M344.35 40.2v6" stroke="#e7bf86" stroke-width=".9"/><path d="M417.2 35.2l6.2-1 2.8 7.2-6.3 1.6z" fill="url(#pp)" stroke="#9a9be0" stroke-width=".6" stroke-linejoin="round"/><path d="M416.3 43.6l3-2.2 7.6-1.6 5.2 2.3v4.6l-6.8 3-9-2.4z" fill="url(#pr)" stroke="#8a8a8a" stroke-width=".7" stroke-linejoin="round"/><path d="M416.5 43.8l8.8 2.2 6.6-3.6" fill="none" stroke="#fff" stroke-width=".8"/><path d="M423.2 47.6l6.6-2.6.2 1-6.6 2.6z" fill="#222"/><path d="M424 48.8l6.4-2.2 1.8.9-6.6 2.4z" fill="#e6e6e6" stroke="#aaa" stroke-width=".4"/><path d="M490.6 37.4l10.6-3.3 5.6 13.6-10.8 3.8z" fill="url(#lb)" stroke="#6f7f8f" stroke-width=".5" stroke-linejoin="round"/><path d="M490.6 37.4l5.4 14.1M501.2 34.1l5.6 13.6" stroke="#2f3338" stroke-width="1.1" stroke-linecap="round"/><path d="M493.8 41.4l9.2-3M495.4 45.2l9.2-3M497 48.8l9-3" stroke="#8e9aa6" stroke-width=".7"/><rect x="570.3" y="37" width="15.7" height="10" rx="1.4" fill="#6d7272"/><rect x="571.7" y="38.5" width="12.9" height="7" fill="#c4c8c8"/><text x="578.1" y="44.9" font-size="7.6" font-weight="bold" text-anchor="middle" fill="#ee1c1c" textLength="11.6" lengthAdjust="spacingAndGlyphs">50.1</text><rect x="645.3" y="36.2" width="16" height="15" fill="#e2f6f6"/><path d="M661.3 37v14.6h-15" fill="none" stroke="#a8a8a8" stroke-width=".8"/><path d="M647.5 35.8v16M645 38.3h16.4" stroke="#222" stroke-width="1"/><text x="648.3" y="43.6" font-size="4.6" font-weight="bold" fill="#222" textLength="8" lengthAdjust="spacingAndGlyphs">50.1</text><text x="648.3" y="47.6" font-size="4.6" font-weight="bold" fill="#222" textLength="8" lengthAdjust="spacingAndGlyphs">53.2</text><path d="M645.6 40.5v1.2M645.6 44v1.2M645.6 47.2v1.2M656.6 40.2v1.3M656.6 43.5v1.3M656.6 47v1.3" stroke="#111" stroke-width=".9"/><path d="M658.4 45.4l2 1.4-2 1.4" fill="none" stroke="#666" stroke-width=".7"/><rect x="720.5" y="36.2" width="15" height="15.4" fill="#e0f2f2"/><path d="M735.3 36.5v15M721 51.4h14.6" fill="none" stroke="#8c8c8c" stroke-width=".8"/><path d="M721.5 35.8v16M719.6 38.4h16" stroke="#222" stroke-width="1"/><text x="722.6" y="44.4" font-size="6" fill="#111">1</text><text x="725.6" y="48" font-size="6.4" fill="#111">2</text><text x="730" y="51.6" font-size="6" fill="#444">3</text><rect x="797" y="35.6" width="13.4" height="13" fill="#ececec"/><path d="M797 49.2h13.5" stroke="#a8a8a8" stroke-width="1" fill="none"/><path d="M810.5 36v15.6" stroke="#5a5a5a" stroke-width="1" fill="none"/><path d="M796.5 35v16.8M794.6 50.4h16" stroke="#2a2a2a" stroke-width="1" fill="none"/><path d="M794.4 37.3h2M794.4 40.3h2M794.4 43.3h2M794.4 46.3h2M799.2 49.5v2.2M802.2 49.5v2.2M805.3 49.5v2.2M808.3 49.5v2.2" stroke="#222" stroke-width=".9"/><path d="M797 43.6l4-6.2 3.4 5.2 2.2-3 2.6 3" fill="none" stroke="#f25555" stroke-width="1.1" stroke-linejoin="round"/><rect x="872" y="35.6" width="12.6" height="13" fill="#ececec"/><path d="M884.3 36v15.4" stroke="#aaa" stroke-width=".9"/><path d="M871.5 43h2.6v-2h2v-2h2v-2h2.4v3h2v3h2.2v6.3h-13.2z" fill="#0a73d2"/><path d="M871.5 35v16.8M869.6 49.5h15.4" stroke="#222" stroke-width="1" fill="none"/><path d="M869.3 37.3h2M869.3 40.3h2M869.3 43.3h2M869.3 46.3h2M874.2 49.8v1.8M877.2 49.8v1.8M880.3 49.8v1.8M883 49.8v1.8" stroke="#222" stroke-width=".9"/><path d="M944.1 36.8h4.9" stroke="#111" stroke-width=".9"/><text x="946.5" y="44.3" font-size="10.4" text-anchor="middle" fill="#111">x</text><text x="947.4" y="50.1" font-size="9.6" text-anchor="middle" fill="#111">σ</text><text x="955.4" y="47" font-size="11.2" text-anchor="middle" fill="#111">Σ</text><rect x="2.6" y="1.2" width="6" height="11.4" rx="1.2" fill="#1d1d1d"/><circle cx="5.6" cy="6.9" r="4.7" fill="#2b2b2b"/><circle cx="5.6" cy="6.9" r="3" fill="#e6e6e6"/><circle cx="6" cy="6.6" r="1.1" fill="#666"/><rect x="910.6" y="6.2" width="8" height="2.7" rx=".5" fill="#fff" stroke="#3f5072" stroke-width=".8"/><rect x="931.6" y="2.4" width="5" height="4.8" fill="none" stroke="#3f5072" stroke-width="2.2"/><rect x="931.6" y="2.4" width="5" height="4.8" fill="none" stroke="#fff" stroke-width="1"/><rect x="929.8" y="4.3" width="5" height="4.8" fill="#a5bfdf" stroke="#3f5072" stroke-width="2.2"/><rect x="929.8" y="4.3" width="5" height="4.8" fill="#5d7fae" stroke="#fff" stroke-width="1.2"/><path d="M958.6 3.6l4.8 4.6M963.4 3.6l-4.8 4.6" stroke="#6a3a3a" stroke-width="3.2" stroke-linecap="square"/><path d="M958.6 3.6l4.8 4.6M963.4 3.6l-4.8 4.6" stroke="#fff" stroke-width="1.9" stroke-linecap="square"/><rect x="6" y="76.6" width="12.2" height="7.6" fill="#fafafa"/><path d="M6.5 83.2v-5.8h11.4" fill="none" stroke="#3c3c3c" stroke-width="1"/><text x="12.4" y="82.9" font-size="5.6" font-weight="bold" text-anchor="middle" fill="#f01818" textLength="9.4" lengthAdjust="spacingAndGlyphs">50.1</text><rect x="8" y="206" width="11.4" height="12" fill="#fafafa"/><rect x="8" y="206.3" width="11.4" height="1.9" fill="#a9a9a9"/><path d="M11 206v12" stroke="#222" stroke-width="1"/><text x="11.6" y="212.6" font-size="4.6" font-weight="bold" fill="#222" textLength="6.6" lengthAdjust="spacingAndGlyphs">50.1</text><text x="11.6" y="216.8" font-size="4.6" font-weight="bold" fill="#222" textLength="6.6" lengthAdjust="spacingAndGlyphs">53.2</text><path d="M9 210v1.6M9 213.4v1.6M9 216v1.2M18.6 212.4v1M18.6 215.8v1" stroke="#222" stroke-width="1"/><rect x="6" y="387" width="12" height="11" fill="#fafafa"/><path d="M6 388.4h11M8.3 386.8v11" stroke="#151515" stroke-width="1"/><text x="9.6" y="393.2" font-size="4.4" fill="#111">1</text><text x="11.6" y="395.4" font-size="4.6" fill="#111">2</text><text x="14.4" y="397.8" font-size="4.8" font-weight="bold" fill="#222">3</text><rect x="243.2" y="76.4" width="12" height="11.4" fill="#fcfcfc"/><path d="M244.7 76.6v9" stroke="#000" stroke-width="1.2" stroke-dasharray="1.3 .9"/><path d="M243.4 85.6h11.6" stroke="#111" stroke-width="1"/><path d="M245.6 86.3v1M247.8 86.3v1M250 86.3v1M252.2 86.3v1M254.2 86.3v1" stroke="#333" stroke-width=".9"/><path d="M245.2 82.2l3.3-3.9 2.8 3.3 1.5-1.7 2.3 1.9" fill="none" stroke="#fb4d4d" stroke-width="1"/><rect x="602" y="76.2" width="11.6" height="11" fill="#fcfcfc"/><path d="M603.6 85v-1.6h1.3v-1.4h1.2v-1.6h1.1v-1.6h1v-1.6h1.7v1.6h1v1.6h1v1.6h1.2v1.4h1.3v1.6z" fill="#0a0aff"/><path d="M603 76.4v10.4" stroke="#000" stroke-width="1.2" stroke-dasharray="1.3 .8"/><path d="M603 85.2h10.4" stroke="#080830" stroke-width=".9"/><path d="M605 85.8v1M607.2 85.8v1M609.4 85.8v1M612.2 85.8v1" stroke="#333" stroke-width=".8"/><rect x="243.2" y="367.2" width="11.8" height="11.6" fill="#fcfcfc"/><path d="M244.3 368.5h3.8" stroke="#111" stroke-width=".9"/><text x="246.2" y="373.3" font-size="7.6" font-weight="bold" text-anchor="middle" fill="#111">x</text><text x="246.7" y="378.1" font-size="7.4" font-weight="bold" text-anchor="middle" fill="#111">σ</text><text x="252" y="375.8" font-size="9" text-anchor="middle" fill="#000">Σ</text></svg>
</body></html>
